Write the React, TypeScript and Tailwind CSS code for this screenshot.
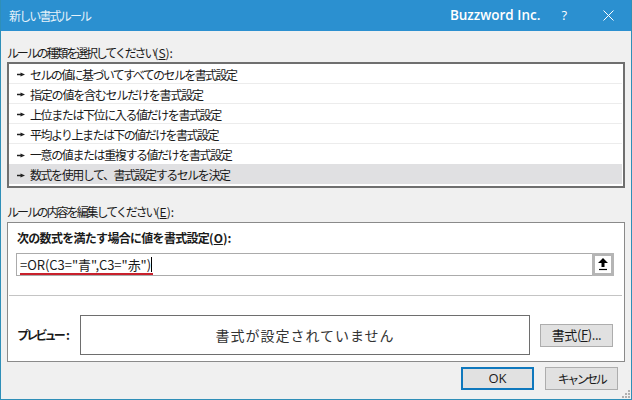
const jp = "font-['Meiryo_UI','Noto_Sans_CJK_JP',sans-serif]";

const rules: [string, string][] = [
  ["セルの値に基づいてすべてのセルを書式設定", "tracking-[-1.6px]"],
  ["指定の値を含むセルだけを書式設定", "tracking-[-1.2px]"],
  ["上位または下位に入る値だけを書式設定", "tracking-[-1.4px]"],
  ["平均より上または下の値だけを書式設定", "tracking-[-1.55px]"],
  ["一意の値または重複する値だけを書式設定", "tracking-[-1.4px]"],
  ["数式を使用して、書式設定するセルを決定", "tracking-[-1.45px]"],
];

function Bullet() {
  return (
    <svg width="8" height="5" viewBox="0 0 8 5" className="mr-[5px] shrink-0">
      <path d="M0 1.8h3.5V.6L8 2.5 3.5 4.4V3.2H0z" fill="#222" />
    </svg>
  );
}

export default function App() {
  return (
    <div className={`${jp} relative flex h-[400px] w-[632px] flex-col overflow-hidden border border-t-0 border-[#2f8fb8] bg-[#f0f0f0] text-[12px] text-[#1a1a1a]`}>
      <div className="flex h-[31px] shrink-0 items-center bg-[#2b90d0] pl-[8px] text-white">
        <span className="text-[12px] tracking-[-1.85px] text-[#e6f2fa]">新しい書式ルール</span>
        <span className="ml-auto font-['Open_Sans',sans-serif] text-[13.5px] font-semibold leading-none">Buzzword Inc.</span>
        <span className="ml-[21px] font-['Open_Sans',sans-serif] text-[13px] leading-none">?</span>
        <svg width="11" height="11" viewBox="0 0 11 11" className="ml-[36px] mr-[17px]">
          <path d="M.5.5l10 10M10.5.5l-10 10" stroke="#fff" strokeWidth="1" fill="none" />
        </svg>
      </div>

      <div className="flex flex-1 flex-col pl-[6px] pr-[6px]">
        <div className="mt-[12px] h-[19px] whitespace-nowrap leading-[19px]">
          <span className="tracking-[-2.13px]">ルールの種類を選択してください</span>
          <span>(<span className="underline">S</span>):</span>
        </div>

        <div className="h-[126px] border-2 border-[#6f6f6f] bg-white pr-[1px]">
          {rules.map(([t, track], i) => (
            <div
              key={t}
              className={`flex h-[20px] items-center pl-[8px] pt-[2px] ${
                i === 5 ? "bg-[#e0e0e2]" : i < 4 ? "border-b border-[#ececec]" : ""
              }`}
            >
              <Bullet />
              <span className={`whitespace-nowrap ${track}`}>{t}</span>
            </div>
          ))}
        </div>

        <div className="mt-[13px] h-[21px] whitespace-nowrap leading-[21px]">
          <span className="tracking-[-2.05px]">ルールの内容を編集してください</span>
          <span>(<span className="underline">E</span>):</span>
        </div>

        <div className="flex h-[140px] flex-col border border-[#8a8a8a] bg-white">
          <div className="ml-[9px] mt-[6px] h-[18px] whitespace-nowrap font-bold leading-[18px]">
            <span className="tracking-[-0.7px]">次の数式を満たす場合に値を書式設定</span>
            <span>(<span className="underline">O</span>):</span>
          </div>
          <div className="relative ml-[8px] mr-[10px] mt-[6px] flex h-[23px] items-center border border-[#ababab] pl-[3px]">
            <span className="whitespace-nowrap text-[13px] tracking-[-0.05px]">=OR(C3="青",C3="赤")</span>
            <span className="h-[15px] w-px bg-black" />
            <div className="-my-px -mr-px ml-auto flex h-[23px] w-[22px] shrink-0 items-center justify-center border-[3px] border-[#b5b5b5] bg-white">
              <svg width="10" height="13" viewBox="0 0 10 13">
                <path d="M5 0l5 5H6.5v4h-3V5H0z" fill="#000" />
                <path d="M1 11.5h8" stroke="#000" strokeWidth="1.2" />
              </svg>
            </div>
            <span className="absolute left-[3px] top-[19px] h-[2px] w-[133px] bg-[#c8202c]" />
          </div>
          <div className="ml-[1px] mr-[2px] mt-[19px] h-px bg-[#c4c4c4]" />
          <div className="mt-[19px] flex items-center pl-[9px]">
            <span className="w-[63px] whitespace-nowrap font-bold">
              <span className="tracking-[-2.8px]">プレビュー</span>
              <span className="ml-[3px]">:</span>
            </span>
            <div className="flex h-[40px] w-[450px] items-center justify-center border border-[#6e6e6e] bg-white text-[14px] tracking-[1px] text-[#333]">
              書式が設定されていません
            </div>
            <button className="ml-[10px] h-[23px] w-[73px] border border-[#adadad] bg-[#e1e1e1] text-[13px] tracking-[-0.4px]">
              書式(<span className="underline">F</span>)...
            </button>
          </div>
        </div>

        <div className="mt-[5px] flex justify-end pr-[7px]">
          <button className="h-[23px] w-[73px] border-2 border-[#0f78bd] bg-[#e1e1e1] font-['Open_Sans',sans-serif] text-[13px]">OK</button>
          <button className="ml-[11px] h-[23px] w-[73px] border border-[#adadad] bg-[#e1e1e1] tracking-[-2.5px]">キャンセル</button>
        </div>
      </div>

      <svg width="10" height="10" viewBox="0 0 10 10" className="absolute bottom-0 right-0">
        <g fill="#b0b0b0">
          <rect x="7" y="1" width="2" height="2" />
          <rect x="4" y="4" width="2" height="2" />
          <rect x="7" y="4" width="2" height="2" />
          <rect x="1" y="7" width="2" height="2" />
          <rect x="4" y="7" width="2" height="2" />
          <rect x="7" y="7" width="2" height="2" />
        </g>
      </svg>
    </div>
  );
}
